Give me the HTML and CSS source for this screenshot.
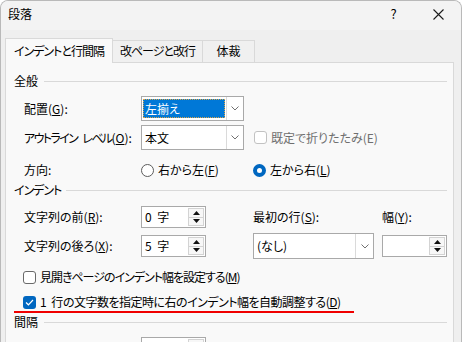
FILE: index.html
```html
<!DOCTYPE html>
<html lang="ja">
<head>
<meta charset="UTF-8">
<meta name="viewport" content="width=device-width, initial-scale=1.0">
<title>段落</title>
<link rel="stylesheet" href="styles.css">
</head>
<body>

<div class="dialog">
    <div class="titlebar">
        <span class="title">段落</span>
        <span class="tb-btn">?</span>
        <span class="tb-btn">
            <svg width="11" height="11" viewBox="0 0 11 11"><path d="M0.5 0.5 L10.5 10.5 M10.5 0.5 L0.5 10.5" stroke="#1b1b1b" stroke-width="1.1"/></svg>
        </span>
    </div>

    <div class="tabs">
        <div class="tab active"><span class="kana">インデントと行間隔</span></div>
        <div class="tab"><span class="kana">改ページと改行</span></div>
        <div class="tab tab-narrow">体裁</div>
    </div>

    <div class="panel">
        <div class="group">全般</div>

        <div class="row row-select">
            <span class="label">配置(<u>G</u>):</span>
            <div class="select">
                <span class="value selected">左揃え</span>
                <span class="arrow"><svg width="8" height="5" viewBox="0 0 8 5"><path d="M0.5 0.5 L4 4 L7.5 0.5" fill="none" stroke="#707070"/></svg></span>
            </div>
        </div>

        <div class="row row-select2">
            <span class="label"><span class="kana-outline">アウトライン レベル</span>(<u>O</u>):</span>
            <div class="select">
                <span class="value">本文</span>
                <span class="arrow"><svg width="8" height="5" viewBox="0 0 8 5"><path d="M0.5 0.5 L4 4 L7.5 0.5" fill="none" stroke="#707070"/></svg></span>
            </div>
            <span class="check-item disabled"><span class="box"></span>既定で折りたたみ(E)</span>
        </div>

        <div class="row row-text">
            <span class="label">方向:</span>
            <span class="radio-item"><span class="radio"></span>右から左(<u>F</u>)</span>
            <span class="radio-item"><span class="radio on"></span>左から右(<u>L</u>)</span>
        </div>

        <div class="group group-indent"><span class="kana">インデント</span></div>

        <div class="row row-spin">
            <span class="label">文字列の前(<u>R</u>):</span>
            <div class="spin">
                <span class="value">0 字</span>
                <span class="spin-btns">
                    <span class="sbtn"><svg width="7" height="4" viewBox="0 0 7 4"><path d="M3.5 0 L7 4 L0 4 Z" fill="#111"/></svg></span>
                    <span class="sbtn"><svg width="7" height="4" viewBox="0 0 7 4"><path d="M0 0 L7 0 L3.5 4 Z" fill="#111"/></svg></span>
                </span>
            </div>
            <span class="label">最初の行(<u>S</u>):</span>
            <span class="label">幅(<u>Y</u>):</span>
        </div>

        <div class="row row-spin2">
            <span class="label">文字列の後ろ(<u>X</u>):</span>
            <div class="spin">
                <span class="value">5 字</span>
                <span class="spin-btns">
                    <span class="sbtn"><svg width="7" height="4" viewBox="0 0 7 4"><path d="M3.5 0 L7 4 L0 4 Z" fill="#111"/></svg></span>
                    <span class="sbtn"><svg width="7" height="4" viewBox="0 0 7 4"><path d="M0 0 L7 0 L3.5 4 Z" fill="#111"/></svg></span>
                </span>
            </div>
            <div class="select select-wide">
                <span class="value">(なし)</span>
                <span class="arrow"><svg width="8" height="5" viewBox="0 0 8 5"><path d="M0.5 0.5 L4 4 L7.5 0.5" fill="none" stroke="#707070"/></svg></span>
            </div>
            <div class="spin spin-wide">
                <span class="value"></span>
                <span class="spin-btns">
                    <span class="sbtn"><svg width="7" height="4" viewBox="0 0 7 4"><path d="M3.5 0 L7 4 L0 4 Z" fill="#111"/></svg></span>
                    <span class="sbtn"><svg width="7" height="4" viewBox="0 0 7 4"><path d="M0 0 L7 0 L3.5 4 Z" fill="#111"/></svg></span>
                </span>
            </div>
        </div>

        <div class="check-row first">
            <span class="check-item"><span class="box"></span><span class="kana">見開きページのインデント幅を設定する(<u>M</u>)</span></span>
        </div>
        <div class="check-row">
            <span class="check-item"><span class="box on"><svg width="9" height="7" viewBox="0 0 9 7"><path d="M1 3.5 L3.4 5.8 L8 1" fill="none" stroke="#fff" stroke-width="1.2"/></svg></span><span class="kana-light">1 行の文字数を指定時に右のインデント幅を自動調整する(<u>D</u>)</span></span>
        </div>
        <div class="red-mark"></div>

        <div class="group group-space">間隔</div>

        <div class="row row-last">
            <span class="label"></span>
            <div class="spin">
                <span class="value"></span>
                <span class="spin-btns">
                    <span class="sbtn"></span>
                    <span class="sbtn"></span>
                </span>
            </div>
        </div>
    </div>
</div>

</body>
</html>
```

FILE: styles.css
```css
body {
    margin: 0;
    width: 463px;
    height: 342px;
    overflow: hidden;
    background-color: #ffffff;
    font-family: "Noto Sans CJK JP", "Noto Sans", sans-serif;
    font-size: 12px;
    line-height: 16px;
    color: #000;
    font-feature-settings: "palt";
    white-space: nowrap;
}

u {
    text-decoration: underline;
    text-underline-offset: 1px;
}

/* Yu Gothic UI tem katakana mais estreito */
.kana {
    letter-spacing: -1px;
}

.kana-light {
    letter-spacing: -0.5px;
    word-spacing: 3px;
}

.kana-outline {
    letter-spacing: -1.6px;
    word-spacing: 4px;
}

.dialog {
    width: 462px;
    height: 360px;
    box-sizing: border-box;
    border: 1px solid #b9b9b9;
    border-bottom: none;
    border-radius: 8px 8px 0 0;
    background-color: #efefef;
    overflow: hidden;
}

/* barra de titulo */
.titlebar {
    display: flex;
    align-items: center;
    height: 29px;
    padding-left: 7px;
    background-color: #f3f3f3;
}

.title {
    flex: 1;
    margin-top: -3px;
}

.tb-btn {
    display: flex;
    align-items: center;
    justify-content: center;
    width: 45px;
    height: 29px;
    margin-top: -3px;
    font-size: 13px;
}

/* abas */
.tabs {
    display: flex;
    align-items: flex-end;
    height: 32px;
    margin-left: 4px;
}

.tab {
    box-sizing: border-box;
    height: 22px;
    padding-top: 2px;
    text-align: center;
    width: 90px;
    border: 1px solid #d9d9d9;
    border-bottom: none;
    border-left: none;
    background-color: #f0f0f0;
}

.tab.active {
    position: relative;
    z-index: 1;
    width: 108px;
    height: 25px;
    margin-bottom: -1px;
    padding-top: 4px;
    border-left: 1px solid #d9d9d9;
    background-color: #f9f9f9;
}

.tab-narrow {
    width: 52px;
}

.panel {
    box-sizing: border-box;
    width: 449px;
    height: 300px;
    margin-left: 4px;
    padding: 0 6px 0 8px;
    border: 1px solid #d9d9d9;
    background-color: #f9f9f9;
}

.group {
    display: flex;
    align-items: center;
    gap: 6px;
    height: 16px;
    margin-top: 10px;
}

.group::after {
    content: "";
    flex: 1;
    height: 1px;
    background-color: #d9d9d9;
}

.group-indent {
    margin-top: 4px;
    gap: 5px;
}

.group-space {
    margin-top: 1px;
}

.row {
    display: grid;
    grid-template-columns: 117px 112px 129px 1fr;
    align-items: center;
    padding-left: 10px;
}

.row-select { height: 25px; margin-top: 7px; }
.row-select2 { height: 25px; margin-top: 4px; }
.row-text { height: 16px; margin-top: 12px; }
.row-spin { height: 22px; margin-top: 8px; }
.row-spin2 { height: 25px; margin-top: 5px; }
.row-last { height: 22px; margin-top: 7px; }

/* caixas de selecao */
.select {
    display: flex;
    box-sizing: border-box;
    width: 103px;
    height: 25px;
    border: 1px solid #a9a9a9;
    background-color: #fff;
}

.select .value {
    flex: 1;
    display: flex;
    align-items: center;
    padding-left: 3px;
}

.select .value.selected {
    margin: 2px 1px 2px 1px;
    padding-left: 2px;
    color: #fff;
    background-color: #0078d7;
    outline: 1px dotted #d9a54a;
    outline-offset: -1px;
}

.select .arrow {
    display: flex;
    align-items: center;
    justify-content: center;
    width: 16px;
    border-left: 1px solid #dadada;
}

.select-wide {
    width: 121px;
    height: 26px;
}

.select-wide .arrow {
    width: 17px;
}

/* spinners */
.spin {
    display: flex;
    box-sizing: border-box;
    width: 65px;
    height: 22px;
    border: 1px solid #a9a9a9;
    background-color: #fff;
}

.spin .value {
    flex: 1;
    padding-left: 3px;
    line-height: 20px;
    word-spacing: 3px;
}

.spin-btns {
    display: flex;
    flex-direction: column;
    width: 16px;
    padding: 1px 1px 1px 0;
}

.sbtn {
    flex: 1;
    display: flex;
    align-items: center;
    justify-content: center;
    border: 1px solid #d3d3d3;
    background-color: #f7f7f7;
}

.sbtn + .sbtn {
    border-top: none;
}

.spin-wide {
    width: 65px;
}

/* radio e checkbox */
.radio-item, .check-item {
    display: flex;
    align-items: center;
}

.radio {
    box-sizing: border-box;
    width: 13px;
    height: 13px;
    margin-right: 4px;
    border: 1px solid #5c5c5c;
    border-radius: 50%;
    background-color: #fff;
}

.radio.on {
    border: 4px solid #0067c0;
}

.box {
    display: flex;
    align-items: center;
    justify-content: center;
    box-sizing: border-box;
    width: 13px;
    height: 13px;
    margin-right: 4px;
    border: 1px solid #6a6a6a;
    border-radius: 3px;
    background-color: #fff;
}

.box.on {
    border: none;
    background-color: #0067c0;
}

.check-item.disabled {
    margin-left: 1px;
    color: #6e6e6e;
}

.check-item.disabled .box {
    border-color: #c2c2c2;
}

.check-row {
    height: 16px;
    margin-top: 9px;
    padding-left: 9px;
}

.check-row.first {
    margin-top: 11px;
}

.red-mark {
    width: 340px;
    height: 2px;
    margin-top: 1px;
    background-color: #f00000;
}
```
